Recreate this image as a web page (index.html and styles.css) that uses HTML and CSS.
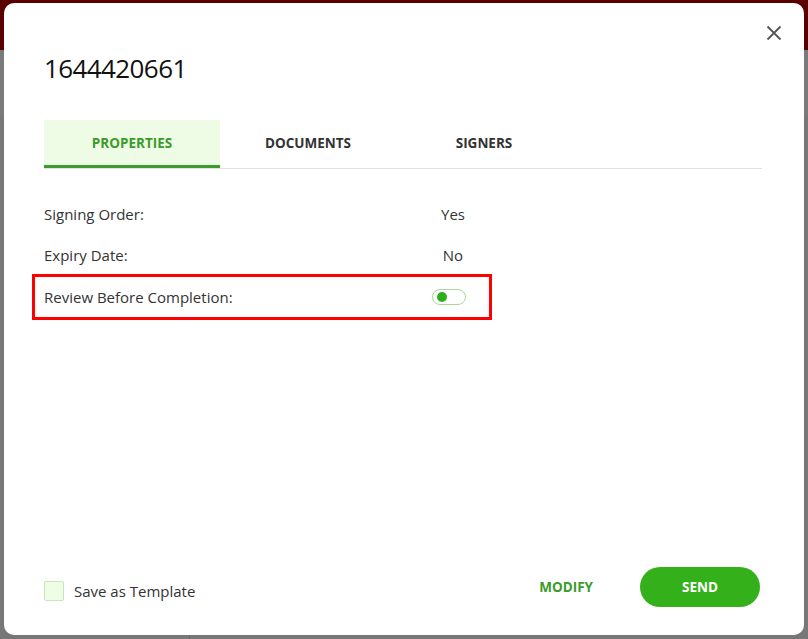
FILE: index.html
```html
<!DOCTYPE html>
<html lang="en">
<head>
    <meta charset="UTF-8">
    <meta name="viewport" content="width=device-width, initial-scale=1.0">
    <title>Envelope 1644420661</title>
    <link rel="stylesheet" href="styles.css">
</head>
<body>
    <div class="app">
        <header class="app-header"></header>
        <div class="app-body">
            <aside class="app-sidebar"></aside>
            <section class="app-content"></section>
        </div>
    </div>

    <div class="overlay">
        <div class="modal">
            <button class="close" type="button" aria-label="Close">
                <svg width="16" height="16" viewBox="0 0 16 16">
                    <path d="M1.5 1.5 L14.5 14.5 M14.5 1.5 L1.5 14.5" stroke="#555" stroke-width="1.8" fill="none"/>
                </svg>
            </button>

            <h1 class="modal-title">1644420661</h1>

            <nav class="tabs">
                <div class="tab active">PROPERTIES</div>
                <div class="tab">DOCUMENTS</div>
                <div class="tab">SIGNERS</div>
            </nav>

            <div class="props">
                <div class="prop-row">
                    <span class="prop-label">Signing Order:</span>
                    <span class="prop-value">Yes</span>
                </div>
                <div class="prop-row">
                    <span class="prop-label">Expiry Date:</span>
                    <span class="prop-value">No</span>
                </div>
                <div class="prop-row highlight">
                    <span class="prop-label">Review Before Completion:</span>
                    <span class="toggle"><span class="toggle-dot"></span></span>
                </div>
            </div>

            <footer class="modal-footer">
                <label class="template">
                    <span class="checkbox"></span>
                    Save as Template
                </label>
                <button class="btn-link" type="button">MODIFY</button>
                <button class="btn-send" type="button">SEND</button>
            </footer>
        </div>
    </div>
</body>
</html>
```

FILE: styles.css
```css
* {
    box-sizing: border-box;
    font-family: 'Open Sans', 'Noto Sans', sans-serif;
}

body {
    margin: 0;
    height: 639px;
    overflow: hidden;
    background-color: #777;
}

/* app behind the dialog, dimmed */
.app {
    height: 100%;
    display: flex;
    flex-direction: column;
}

.app-header {
    height: 50px;
    background-color: #5a0000;
}

.app-body {
    flex: 1;
    display: flex;
    background-color: #777;
    border-top: 67px solid #7a7a7a;
}

.app-sidebar {
    width: 190px;
    border-right: 1px solid #6a6a6a;
}

.app-content {
    flex: 1;
}

/* dialog */
.overlay {
    position: fixed;
    top: 0;
    left: 0;
    right: 0;
    bottom: 0;
    padding: 3px 4px 4px 4px;
}

.modal {
    position: relative;
    height: 100%;
    background-color: #fff;
    border-radius: 10px;
    padding: 0 42px 28px 40px;
    display: flex;
    flex-direction: column;
}

.close {
    position: absolute;
    top: 22px;
    right: 22px;
    width: 16px;
    height: 16px;
    padding: 0;
    border: none;
    background: none;
    cursor: pointer;
}

.modal-title {
    margin: 48px 0 0 0;
    font-size: 26px;
    font-weight: 400;
    line-height: 34px;
    color: #111;
    letter-spacing: -0.6px;
}

.tabs {
    margin-top: 35px;
    display: flex;
    border-bottom: 1px solid #e2e2e2;
}

.tab {
    width: 176px;
    height: 48px;
    display: flex;
    align-items: center;
    justify-content: center;
    font-size: 13.5px;
    font-weight: 700;
    color: #333;
    border-bottom: 3px solid transparent;
}

.tab.active {
    background-color: #eefce5;
    color: #3b9b2b;
    border-bottom-color: #3b9b2b;
}

.props {
    padding-top: 24px;
}

.prop-row {
    height: 41px;
    display: grid;
    grid-template-columns: 376px 66px;
    align-items: center;
    font-size: 15px;
    color: #333;
}

.prop-value {
    justify-self: center;
}

.highlight {
    height: 46px;
    width: 460px;
    margin: -1px 0 0 -12px;
    padding-left: 9px;
    border: 3px solid #ff0000;
}

.toggle {
    width: 34px;
    height: 16px;
    margin-left: 12px;
    border: 1px solid #a8d89a;
    border-radius: 8px;
    display: flex;
    align-items: center;
    padding-left: 4px;
}

.toggle-dot {
    width: 10px;
    height: 10px;
    border-radius: 50%;
    background-color: #2daf1c;
}

.modal-footer {
    margin-top: auto;
    margin-right: 2px;
    display: flex;
    align-items: center;
}

.template {
    display: flex;
    align-items: center;
    gap: 10px;
    font-size: 15px;
    color: #333;
    margin-top: 8px;
    margin-right: auto;
}

.checkbox {
    width: 20px;
    height: 20px;
    border: 1px solid #c4e9b7;
    border-radius: 2px;
    background-color: #effde6;
}

.btn-link {
    border: none;
    background: none;
    font-size: 13.5px;
    font-weight: 700;
    color: #3b9b2b;
    padding: 0;
    margin-right: 47px;
    cursor: pointer;
}

.btn-send {
    width: 120px;
    height: 40px;
    border: none;
    border-radius: 20px;
    background-color: #33b01a;
    color: #fff;
    font-size: 13.5px;
    font-weight: 700;
    cursor: pointer;
}
```
